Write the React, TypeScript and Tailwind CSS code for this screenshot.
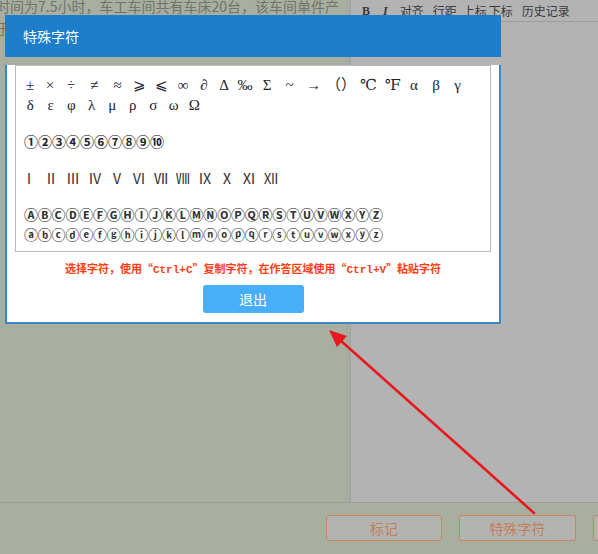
import React from "react";

const cjk = "font-['Noto_Sans_CJK_SC',sans-serif]";

const row1: { ch: string; w: string }[] = [
  { ch: "±", w: "w-[20px]" },
  { ch: "×", w: "w-[20px]" },
  { ch: "÷", w: "w-[22px]" },
  { ch: "≠", w: "w-[24px]" },
  { ch: "≈", w: "w-[23px]" },
  { ch: "⩾", w: "w-[21px]" },
  { ch: "⩽", w: "w-[22px]" },
  { ch: "∞", w: "w-[22px]" },
  { ch: "∂", w: "w-[20px]" },
  { ch: "Δ", w: "w-[20px]" },
  { ch: "‰", w: "w-[22px]" },
  { ch: "Σ", w: "w-[22px]" },
  { ch: "~", w: "w-[23px]" },
  { ch: "→", w: "w-[25px]" },
  { ch: "（）", w: "w-[29px]" },
  { ch: "℃", w: "w-[27px]" },
  { ch: "℉", w: "w-[21px]" },
  { ch: "α", w: "w-[22px]" },
  { ch: "β", w: "w-[22px]" },
  { ch: "γ", w: "w-[21px]" },
];

const row2 = ["δ", "ε", "φ", "λ", "μ", "ρ", "σ", "ω", "Ω"];
const nums = "①②③④⑤⑥⑦⑧⑨⑩";
const romans = ["Ⅰ", "Ⅱ", "Ⅲ", "Ⅳ", "Ⅴ", "Ⅵ", "Ⅶ", "Ⅷ", "Ⅸ", "Ⅹ", "Ⅺ", "Ⅻ"];
const upper = "ⒶⒷⒸⒹⒺⒻⒼⒽⒾⒿⓀⓁⓂⓃⓄⓅⓆⓇⓈⓉⓊⓋⓌⓍⓎⓏ";
const lower = "ⓐⓑⓒⓓⓔⓕⓖⓗⓘⓙⓚⓛⓜⓝⓞⓟⓠⓡⓢⓣⓤⓥⓦⓧⓨⓩ";

function SymbolBox() {
  const sym = "font-['Liberation_Serif','DejaVu_Serif','Noto_Sans_CJK_SC',serif] text-[15px] text-[#23232f]";
  return (
    <div className="mx-[8px] mt-[8px] h-[187px] border border-[#b9b9b9] pt-[9px]">
      <div className={`flex h-[20px] items-center pl-[4px] ${sym}`}>
        {row1.map((s) => (
          <span key={s.ch} className={`${s.w} shrink-0 text-center`}>
            {s.ch}
          </span>
        ))}
      </div>
      <div className={`flex h-[20px] items-center pl-[4px] ${sym}`}>
        {row2.map((c) => (
          <span key={c} className="w-[20.5px] shrink-0 text-center">
            {c}
          </span>
        ))}
      </div>
      <div className={`mt-[16px] flex h-[20px] items-center pl-[8px] text-[14px] font-semibold text-[#23232f] ${cjk}`}>
        {Array.from(nums).map((c) => (
          <span key={c} className="w-[14px] shrink-0 text-center">
            {c}
          </span>
        ))}
      </div>
      <div className="mt-[17px] flex h-[20px] items-center pl-[2px] font-['Noto_Sans_CJK_SC',serif] text-[14px] text-[#3a2f3a]">
        {romans.map((c) => (
          <span key={c} className="w-[22px] shrink-0 text-center">
            {c}
          </span>
        ))}
      </div>
      <div className={`mt-[16px] flex h-[20px] items-center pl-[8px] text-[14px] font-semibold text-[#333] ${cjk}`}>
        {Array.from(upper).map((c) => (
          <span key={c} className="w-[13.8px] shrink-0 text-center">
            {c}
          </span>
        ))}
      </div>
      <div className={`flex h-[20px] items-center pl-[8px] text-[14px] font-semibold text-[#333] ${cjk}`}>
        {Array.from(lower).map((c) => (
          <span key={c} className="w-[13.8px] shrink-0 text-center">
            {c}
          </span>
        ))}
      </div>
    </div>
  );
}

function SpecialCharDialog() {
  return (
    <div className={`absolute left-[5px] top-[15px] w-[496px] ${cjk}`}>
      <div className="flex h-[42px] items-center bg-[#1e7ecb] pl-[18px] text-[14px] text-white">特殊字符</div>
      <div className="border-2 border-t-0 border-[#3a87c8] bg-white pb-[9px]">
        <SymbolBox />
        <p className="mt-[8px] h-[16px] text-center text-[11px] font-bold leading-[16px] text-[#ff3d12]">
          选择字符，使用“<span className="font-['Liberation_Mono',monospace]">Ctrl+C</span>”复制字符，在作答区域使用“
          <span className="font-['Liberation_Mono',monospace]">Ctrl+V</span>”粘贴字符
        </p>
        <div className="mt-[9px] flex justify-center">
          <button className="h-[28px] w-[101px] rounded-[3px] bg-[#46aff7] text-[14px] text-white">退出</button>
        </div>
      </div>
    </div>
  );
}

function Arrow() {
  return (
    <svg className="pointer-events-none absolute left-0 top-0" width="598" height="554" viewBox="0 0 598 554">
      <line x1="534" y1="513" x2="340" y2="340" stroke="#e8191e" strokeWidth="2.6" strokeLinecap="round" />
      <polygon points="329,330 337,347 347,336" fill="#e8191e" />
    </svg>
  );
}

export default function App() {
  return (
    <div className={`relative flex h-[554px] w-[598px] flex-col overflow-hidden bg-[#a9afa0] ${cjk}`}>
      <div className="flex h-[502px]">
        <div className="w-[346px] overflow-hidden">
          <div className="-ml-[4px] -mt-[5px] w-[360px] text-[14px] leading-[22px] text-[#6f7369]">
            <div className="whitespace-nowrap">时间为7.5小时，车工车间共有车床20台，该车间单件产</div>
            <div className="whitespace-nowrap">于</div>
          </div>
        </div>
        <div className="w-[4px] bg-[#a6ac9d]" />
        <div className="flex-1 border-l border-[#a2a2a2] bg-[#b3b3b3]">
          <div className="flex h-[22px] items-center border-b border-[#9d9d9d] text-[12px] text-[#3a3a3a]">
            <span className="ml-[11px] font-['Liberation_Serif',serif] font-bold">B</span>
            <span className="ml-[13px] font-['Liberation_Serif',serif] font-bold italic">I</span>
            <span className="ml-[12px]">对齐</span>
            <span className="ml-[9px]">行距</span>
            <span className="ml-[6px]">上标</span>
            <span className="ml-[2px]">下标</span>
            <span className="ml-[9px]">历史记录</span>
          </div>
        </div>
      </div>
      <div className="flex flex-1 gap-[17px] border-t border-[#9b9f97] pl-[326px] pt-[12px]">
        <button className="h-[26px] w-[116px] shrink-0 rounded-[3px] border border-[#c6875d] bg-[#b3b3b1] text-[14px] text-[#c27f5c]">
          标记
        </button>
        <button className="h-[26px] w-[117px] shrink-0 rounded-[3px] border border-[#c6875d] bg-[#b3b3b1] text-[14px] text-[#c27f5c]">
          特殊字符
        </button>
        <div className="h-[26px] w-[116px] shrink-0 rounded-[3px] border border-[#c6875d] bg-[#b3b3b1]" />
      </div>
      <SpecialCharDialog />
      <Arrow />
    </div>
  );
}
